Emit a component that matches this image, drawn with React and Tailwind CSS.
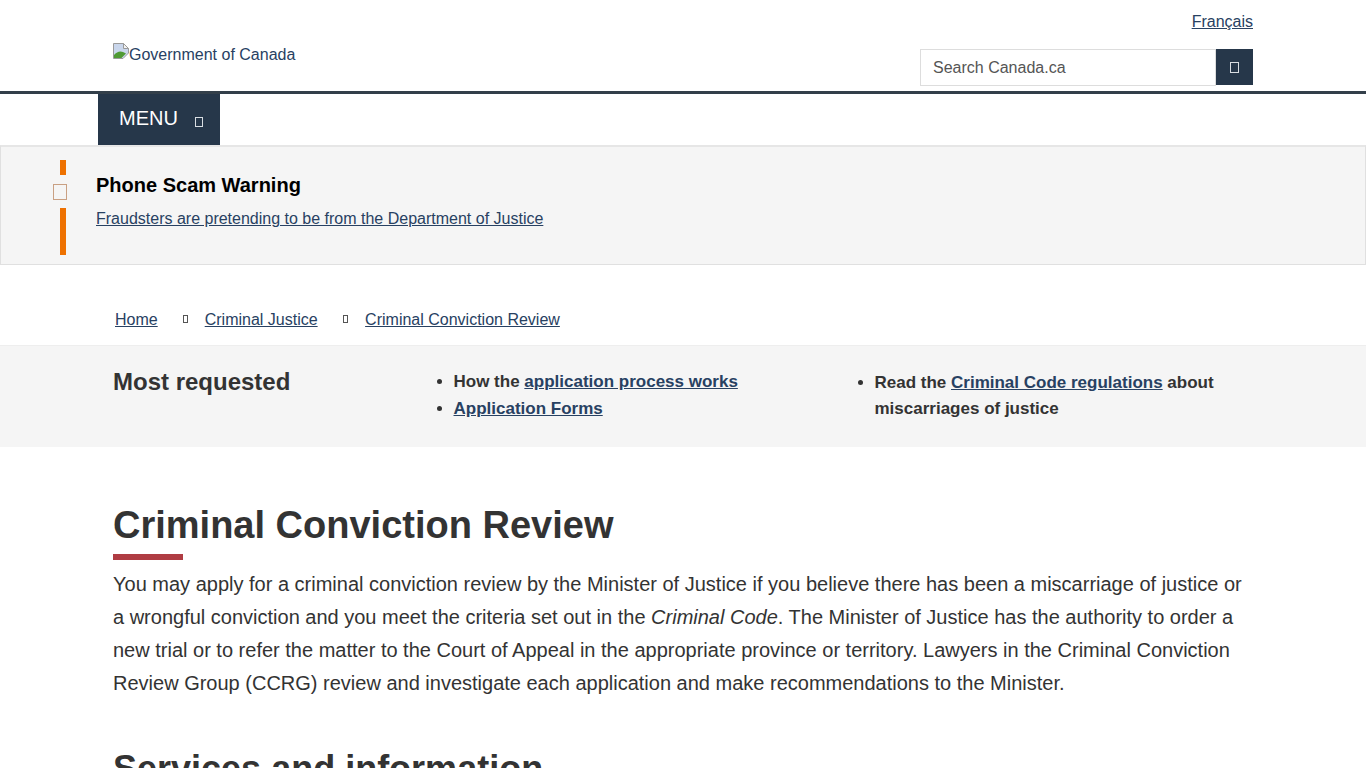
const Tofu = ({ className }) => <span className={"inline-block border " + className} />;

const BrokenImage = () => (
  <svg width="16" height="16" viewBox="0 0 16 16" className="shrink-0">
    <path d="M0.5 0.5H10.5L15.5 5.5V10L10 15.5H0.5Z" fill="#c9d6ec" stroke="#9a9a9a" />
    <path d="M10.5 0.5V5.5H15.5Z" fill="#f2f2f2" stroke="#9a9a9a" />
    <path d="M1 15V12C3.5 9 7 7.5 10 9L13 10.5L8.5 15Z" fill="#4f9a34" />
  </svg>
);

const A = ({ children, className = "" }) => (
  <a href="#" className={"text-[#284162] underline " + className}>{children}</a>
);

export default function App() {
  return (
    <div className="h-[768px] overflow-hidden bg-white font-['Liberation_Sans',Arial,sans-serif] text-[#333]">
      <header className="h-[94px] border-b-[3px] border-[#333f4a]">
        <div className="mx-auto w-[1170px] px-[15px] flex justify-between">
          <div className="pt-[43px] flex items-start h-[91px] text-[#284162] text-base leading-[22px]">
            <BrokenImage />
            <span className="mt-px">Government of Canada</span>
          </div>
          <div className="flex flex-col items-end pt-[11px]">
            <A className="text-base leading-[22px]">Français</A>
            <div className="mt-[16px] flex items-start">
              <div className="w-[296px] h-[37px] border border-[#ddd] px-3 flex items-center text-base text-[#555]">Search Canada.ca</div>
              <div className="w-[37px] h-[36px] bg-[#26374a] flex items-center justify-center">
                <Tofu className="w-[9px] h-[11px] border-[#d8dde2]" />
              </div>
            </div>
          </div>
        </div>
      </header>
      <div className="h-[51px] mx-auto w-[1170px]">
        <div className="w-[122px] h-[51px] bg-[#26374a] text-white flex items-center pl-[21px]">
          <span className="text-xl leading-none -mt-[3px]">MENU</span>
          <Tofu className="ml-[17px] mt-[4px] w-[8px] h-[10px] border-[#d8dde2]" />
        </div>
      </div>
      <section className="h-[120px] bg-[#f5f5f5] border border-[#e0e0e0] border-t-2 border-t-[#e6e6e6] flex">
        <div className="w-[95px] relative shrink-0">
          <div className="absolute left-[59px] top-[13px] w-[6px] h-[15px] bg-[#ee7100]" />
          <Tofu className="absolute left-[52px] top-[37px] w-[14px] h-[16px] border-[#c9a083]" />
          <div className="absolute left-[59px] top-[61px] w-[6px] h-[47px] bg-[#ee7100]" />
        </div>
        <div className="pt-[26px]">
          <h2 className="text-xl leading-[24px] font-bold text-black">Phone Scam Warning</h2>
          <A className="block mt-[11px] text-base leading-[22px]">Fraudsters are pretending to be from the Department of Justice</A>
        </div>
      </section>
      <nav className="h-[80px] mx-auto w-[1170px] pl-[17px] pt-[44px] flex items-start text-base leading-[22px]">
        <A>Home</A>
        <Tofu className="ml-[25px] mt-[6px] w-[5px] h-[8px] border-[#555]" />
        <A className="ml-[17px]">Criminal Justice</A>
        <Tofu className="ml-[25px] mt-[6px] w-[5px] h-[8px] border-[#555]" />
        <A className="ml-[17.5px]">Criminal Conviction Review</A>
      </nav>
      <section className="h-[102px] bg-[#f5f5f5] border-t border-[#eee]">
        <div className="mx-auto w-[1170px] px-[15px] flex pt-[21px]">
          <h2 className="w-[340.5px] shrink-0 text-2xl leading-[30px] font-bold">Most requested</h2>
          <ul className="w-[421px] shrink-0 list-disc mt-px font-bold text-[17px] leading-[27px]">
            <li>How the <A>application process works</A></li>
            <li><A>Application Forms</A></li>
          </ul>
          <ul className="flex-1 list-disc mt-[3px] font-bold text-[17px] leading-[26px]">
            <li>Read the <A>Criminal Code regulations</A> about miscarriages of justice</li>
          </ul>
        </div>
      </section>
      <main className="mx-auto w-[1170px] px-[15px] pt-[54px]">
        <h1 className="text-[38px] leading-[48px] font-bold">Criminal Conviction Review</h1>
        <div className="mt-[5px] w-[70px] h-[6px] bg-[#af3c43]" />
        <p className="mt-[8px] text-xl leading-[33px]">
          You may apply for a criminal conviction review by the Minister of Justice if you believe there has been a miscarriage of justice or a wrongful conviction and you meet the criteria set out in the <em>Criminal Code</em>. The Minister of Justice has the authority to order a new trial or to refer the matter to the Court of Appeal in the appropriate province or territory. Lawyers in the Criminal Conviction Review Group (CCRG) review and investigate each application and make recommendations to the Minister.
        </p>
        <h2 className="mt-[49px] text-4xl leading-[40px] font-bold">Services and information</h2>
      </main>
    </div>
  );
}
